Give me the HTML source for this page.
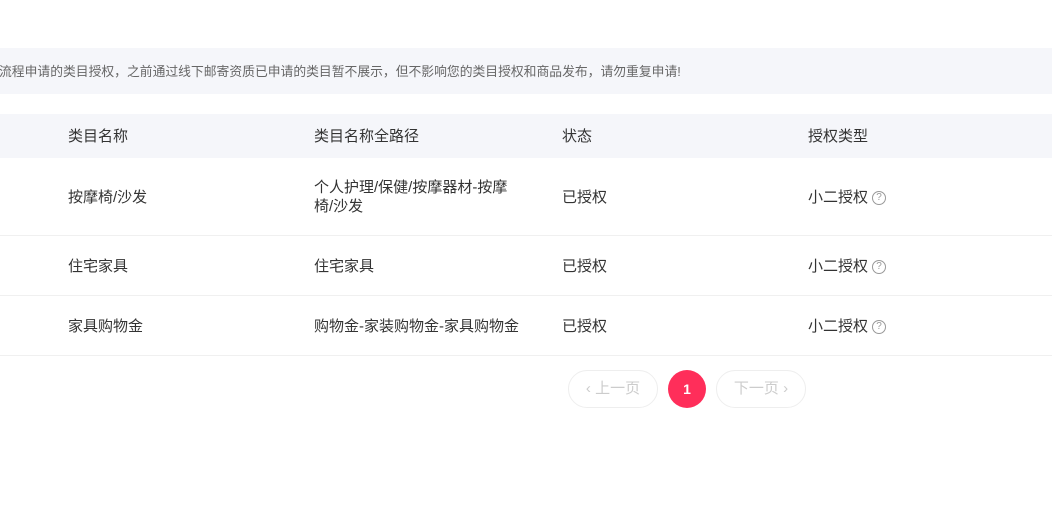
<!DOCTYPE html>
<html><head><meta charset="utf-8"><style>
body{margin:0;width:1052px;height:514px;background:#fff;font-family:"Liberation Sans","Noto Sans CJK SC",sans-serif;color:#333;overflow:hidden;position:relative}
.notice{position:absolute;left:0;top:48px;width:1052px;height:46px;background:#f5f6fa;font-size:12.8px;color:#666;line-height:47px;white-space:nowrap}
.notice span{position:absolute;left:-1px}
.hdr{position:absolute;left:0;top:114px;width:1052px;height:44px;background:#f5f6fa}
.t{position:absolute;font-size:15px;color:#333;white-space:nowrap;line-height:19px}
.line{position:absolute;left:0;width:1052px;height:1px;background:#f0f0f0}
.q{display:inline-block;width:12px;height:12px;border:1px solid #999;border-radius:50%;font-size:10px;line-height:12px;text-align:center;color:#999;vertical-align:2px;margin-left:4px}
.btn{position:absolute;top:370px;height:36px;border:1px solid #eee;border-radius:19px;font-size:15px;color:#ccc;line-height:36px;text-align:center}
.pg{position:absolute;left:668px;top:370px;width:38px;height:38px;border-radius:50%;background:#ff2e5a;color:#fff;font-size:14px;line-height:38px;text-align:center;font-weight:bold}
</style></head><body>
<div class="notice"><span>流程申请的类目授权，之前通过线下邮寄资质已申请的类目暂不展示，但不影响您的类目授权和商品发布，请勿重复申请!</span></div>
<div class="hdr"></div>
<div class="t" style="left:68px;top:127px">类目名称</div>
<div class="t" style="left:314px;top:127px">类目名称全路径</div>
<div class="t" style="left:562px;top:127px">状态</div>
<div class="t" style="left:808px;top:127px">授权类型</div>

<div class="t" style="left:68px;top:188px">按摩椅/沙发</div>
<div class="t" style="left:314px;top:178px">个人护理/保健/按摩器材-按摩<br>椅/沙发</div>
<div class="t" style="left:562px;top:188px">已授权</div>
<div class="t" style="left:808px;top:188px">小二授权<span class="q">?</span></div>
<div class="line" style="top:235px"></div>

<div class="t" style="left:68px;top:257px">住宅家具</div>
<div class="t" style="left:314px;top:257px">住宅家具</div>
<div class="t" style="left:562px;top:257px">已授权</div>
<div class="t" style="left:808px;top:257px">小二授权<span class="q">?</span></div>
<div class="line" style="top:295px"></div>

<div class="t" style="left:68px;top:317px">家具购物金</div>
<div class="t" style="left:314px;top:317px">购物金-家装购物金-家具购物金</div>
<div class="t" style="left:562px;top:317px">已授权</div>
<div class="t" style="left:808px;top:317px">小二授权<span class="q">?</span></div>
<div class="line" style="top:355px"></div>

<div class="btn" style="left:568px;width:88px">‹ 上一页</div>
<div class="pg">1</div>
<div class="btn" style="left:716px;width:88px">下一页 ›</div>
</body></html>
